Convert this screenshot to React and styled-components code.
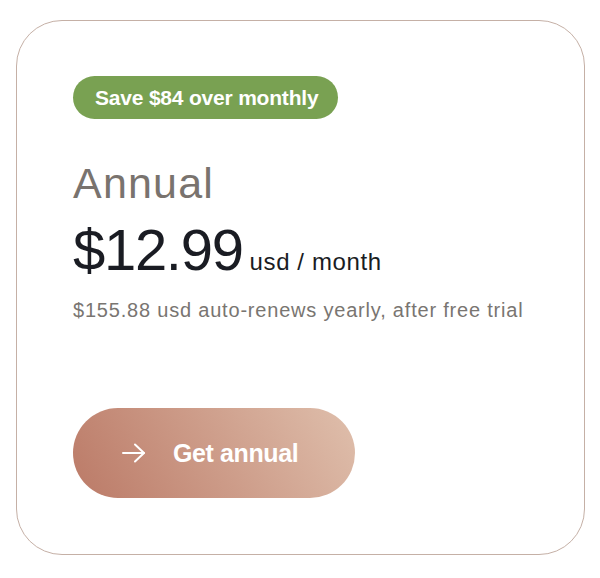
import React from "react";
import styled, { createGlobalStyle } from "styled-components";

const GlobalStyle = createGlobalStyle`
  html, body { margin: 0; padding: 0; background: #ffffff; }
  body { font-family: "Liberation Sans", Arial, sans-serif; }
`;

const Page = styled.div`
  width: 600px;
  height: 578px;
  padding: 20px 15px 23px 16px;
  box-sizing: border-box;
`;

const Card = styled.section`
  box-sizing: border-box;
  width: 569px;
  height: 535px;
  border: 1.5px solid #c5b0a6;
  border-radius: 46px;
  padding: 55px 56px 0 56px;
  display: flex;
  flex-direction: column;
  align-items: flex-start;
`;

const Badge = styled.span`
  display: inline-flex;
  align-items: center;
  height: 43px;
  padding: 0 20px 0 22px;
  border-radius: 22px;
  background: #79a152;
  color: #ffffff;
  font-size: 21px;
  font-weight: 700;
  letter-spacing: -0.2px;
`;

const PlanName = styled.h2`
  margin: 39px 0 0;
  font-size: 43px;
  line-height: 50px;
  font-weight: 400;
  color: #79736e;
  letter-spacing: 1.2px;
`;

const PriceRow = styled.div`
  display: flex;
  align-items: baseline;
  margin-top: 9px;
  color: #1a1c23;
`;

const Amount = styled.span`
  font-size: 58px;
  line-height: 66px;
  letter-spacing: -1.3px;
`;

const Unit = styled.span`
  margin-left: 7px;
  font-size: 24px;
  letter-spacing: 0.6px;
`;

const Note = styled.p`
  margin: 15px 0 0;
  font-size: 20px;
  line-height: 24px;
  color: #797571;
  letter-spacing: 0.8px;
`;

const CtaButton = styled.button`
  margin-top: 86px;
  width: 282px;
  height: 90px;
  border: none;
  border-radius: 45px;
  background: linear-gradient(60deg, #bb7a67 0%, #cd9c89 50%, #dfbfac 100%);
  color: #ffffff;
  font-family: inherit;
  font-size: 25px;
  font-weight: 700;
  letter-spacing: -0.4px;
  display: flex;
  align-items: center;
  gap: 27px;
  padding: 0 0 0 49px;
  cursor: pointer;
`;

const Arrow = () => (
  <svg width="24" height="20" viewBox="0 0 24 20" fill="none" stroke="#fff" strokeWidth="2" strokeLinecap="round" strokeLinejoin="round">
    <path d="M1 10h21" />
    <path d="M13 1.5l9 8.5-9 8.5" />
  </svg>
);

export default function App() {
  return (
    <>
      <GlobalStyle />
      <Page>
        <Card>
          <Badge>Save $84 over monthly</Badge>
          <PlanName>Annual</PlanName>
          <PriceRow>
            <Amount>$12.99</Amount>
            <Unit>usd / month</Unit>
          </PriceRow>
          <Note>$155.88 usd auto-renews yearly, after free trial</Note>
          <CtaButton>
            <Arrow />
            Get annual
          </CtaButton>
        </Card>
      </Page>
    </>
  );
}
